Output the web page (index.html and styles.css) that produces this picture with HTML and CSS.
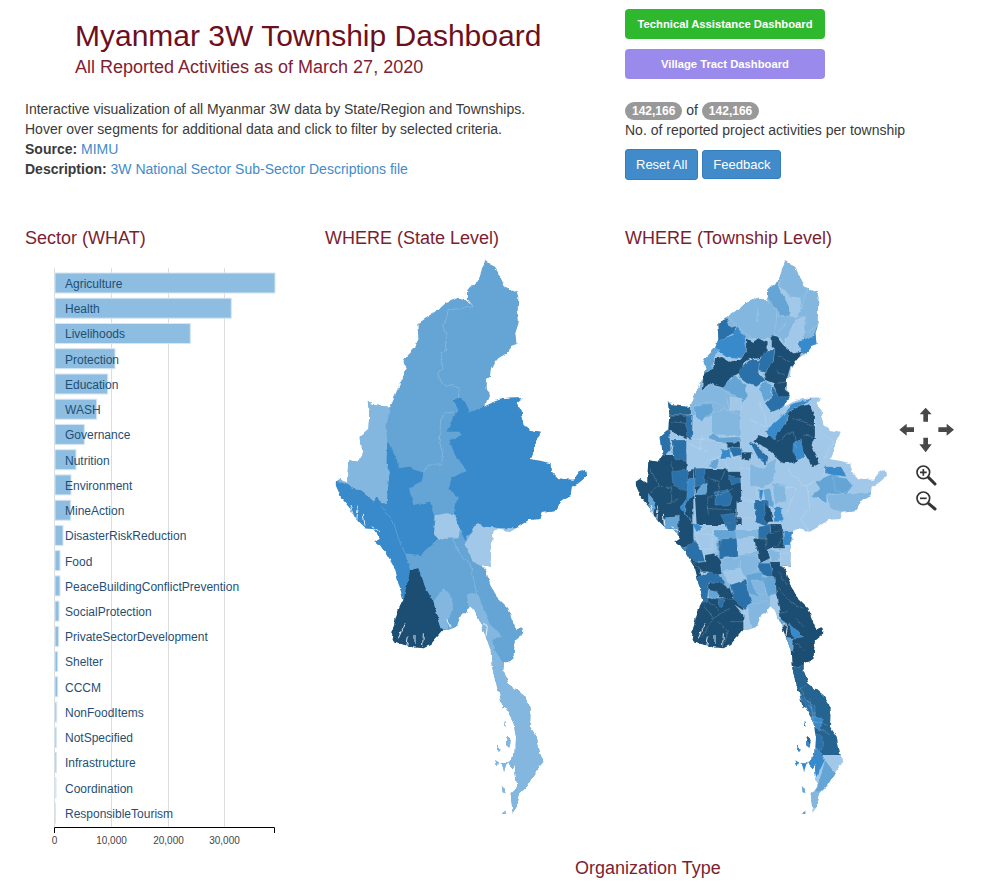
FILE: index.html
```html
<!DOCTYPE html>
<html lang="en">
<head>
<meta charset="utf-8">
<title>Myanmar 3W Township Dashboard</title>
<link rel="stylesheet" href="styles.css">
</head>
<body>
<div class="page">
  <header class="top">
    <div class="intro">
      <h1 class="title">Myanmar 3W Township Dashboard</h1>
      <h2 class="subtitle">All Reported Activities as of March 27, 2020</h2>
      <p class="copy">Interactive visualization of all Myanmar 3W data by State/Region and Townships.<br>
      Hover over segments for additional data and click to filter by selected criteria.<br>
      <b>Source:</b> <a href="#">MIMU</a><br>
      <b>Description:</b> <a href="#">3W National Sector Sub-Sector Descriptions file</a></p>
    </div>
    <div class="actions">
      <a class="dash dash-green" href="#">Technical Assistance Dashboard</a>
      <a class="dash dash-purple" href="#">Village Tract Dashboard</a>
      <div class="counter"><span class="badge">142,166</span> of <span class="badge">142,166</span><br>No. of reported project activities per township</div>
      <div class="btns">
        <a class="btn btn-reset" href="#">Reset All</a>
        <a class="btn" href="#">Feedback</a>
      </div>
    </div>
  </header>

  <section class="charts">
    <div class="col">
      <h3 class="heading">Sector (WHAT)</h3>
      <svg class="rowchart" viewBox="25 262 270 580" width="270" height="580">
        <g class="grid">
          <line x1="54.5" y1="268" x2="54.5" y2="827"/><line x1="111.5" y1="268" x2="111.5" y2="827"/>
          <line x1="168.5" y1="268" x2="168.5" y2="827"/><line x1="224.5" y1="268" x2="224.5" y2="827"/>
        </g>
        <g class="bars">
          <rect x="55" y="273" width="220" height="20"/><rect x="55" y="298.2" width="176.3" height="20"/>
          <rect x="55" y="323.5" width="135.3" height="20"/><rect x="55" y="348.7" width="60" height="20"/>
          <rect x="55" y="374" width="52.7" height="20"/><rect x="55" y="399.2" width="41.7" height="20"/>
          <rect x="55" y="424.4" width="29.3" height="20"/><rect x="55" y="449.7" width="21" height="20"/>
          <rect x="55" y="474.9" width="16" height="20"/><rect x="55" y="500.2" width="15.7" height="20"/>
          <rect x="55" y="525.4" width="8" height="20"/><rect x="55" y="550.6" width="5" height="20"/>
          <rect x="55" y="575.9" width="5" height="20"/><rect x="55" y="601.1" width="4" height="20"/>
          <rect x="55" y="626.4" width="3.7" height="20"/><rect x="55" y="651.6" width="2.7" height="20"/>
          <rect x="55" y="676.8" width="2.7" height="20"/><rect x="55" y="702.1" width="1.7" height="20"/>
          <rect x="55" y="727.3" width="1.3" height="20"/><rect x="55" y="752.6" width="1.3" height="20"/>
          <rect x="55" y="777.8" width="1" height="20"/><rect x="55" y="803" width=".4" height="20"/>
        </g>
        <g class="labels">
          <text x="65" y="288">Agriculture</text><text x="65" y="313">Health</text>
          <text x="65" y="338">Livelihoods</text><text x="65" y="364">Protection</text>
          <text x="65" y="389">Education</text><text x="65" y="414">WASH</text>
          <text x="65" y="439">Governance</text><text x="65" y="465">Nutrition</text>
          <text x="65" y="490">Environment</text><text x="65" y="515">MineAction</text>
          <text x="65" y="540">DisasterRiskReduction</text><text x="65" y="566">Food</text>
          <text x="65" y="591">PeaceBuildingConflictPrevention</text><text x="65" y="616">SocialProtection</text>
          <text x="65" y="641">PrivateSectorDevelopment</text><text x="65" y="666">Shelter</text>
          <text x="65" y="692">CCCM</text><text x="65" y="717">NonFoodItems</text>
          <text x="65" y="742">NotSpecified</text><text x="65" y="767">Infrastructure</text>
          <text x="65" y="793">Coordination</text><text x="65" y="818">ResponsibleTourism</text>
        </g>
        <path class="axis" d="M54.5 833V827.5H274.5V833"/>
        <g class="ticks">
          <text x="54.5" y="844">0</text><text x="111.5" y="844">10,000</text>
          <text x="168.5" y="844">20,000</text><text x="224.5" y="844">30,000</text>
        </g>
      </svg>
    </div>

    <div class="col">
      <h3 class="heading">WHERE (State Level)</h3>
      <svg class="map" viewBox="0 0 810 1740" width="270" height="580">
        <defs>
          <filter id="rough" filterUnits="userSpaceOnUse" x="0" y="0" width="810" height="1740" color-interpolation-filters="sRGB">
            <feTurbulence type="fractalNoise" baseFrequency=".05" numOctaves="2" seed="4" result="n"/>
            <feDisplacementMap in="SourceGraphic" in2="n" scale="12" xChannelSelector="R" yChannelSelector="G"/>
          </filter>
          <clipPath id="outline">
            <path d="M465 18 480 28 495 35 505 50 515 75 525 95 540 108 560 105 565 130 563 170 567 200 556 235 560 270 545 275 530 295 505 310 490 328 482 345 480 365 468 375 467 400 480 415 470 440 462 455 490 440 515 432 578 430 560 445 575 470 580 510 600 525 632 530 628 545 612 565 612 590 602 612 630 618 665 625 665 650 685 670 730 675 745 655 765 645 768 665 745 685 725 695 722 720 695 735 680 765 635 770 628 792 595 795 565 815 540 830 510 820 490 830 485 865 480 935 455 930 470 950 480 985 500 1025 535 1060 545 1090 560 1125 578 1120 580 1135 555 1155 550 1215 522 1225 520 1245 535 1285 580 1320 602 1355 600 1415 620 1445 630 1495 640 1520 620 1545 590 1595 570 1615 560 1655 548 1673 542 1615 562 1595 555 1545 558 1445 550 1400 525 1355 518 1360 510 1325 495 1275 485 1230 482 1185 468 1145 450 1105 430 1060 420 1050 412 1075 395 1075 380 1115 355 1125 340 1125 300 1170 280 1180 250 1177 225 1170 200 1165 185 1155 190 1115 205 1065 220 1035 205 980 195 940 170 900 150 870 130 862 150 848 130 822 105 820 85 800 60 760 35 730 17 690 17 680 30 672 52 688 52 670 55 615 85 620 98 600 92 545 115 525 118 480 113 435 125 450 180 455 195 420 215 375 230 340 218 325 225 310 255 280 265 250 262 205 300 180 330 160 350 142 385 128 410 135 432 155 410 130 412 105 425 90 450 75 452 50Z"/>
            <path d="M525 1400 530 1415 522 1410ZM530 1445 542 1455 538 1478 528 1470ZM500 1465 515 1485 506 1490ZM555 1495 562 1520 548 1540 535 1525ZM515 1525 530 1525 522 1548ZM495 1515 510 1525 502 1530ZM515 1590 530 1615 518 1612ZM515 1675 525 1665 528 1680Z"/>
          </clipPath>
        </defs>
        <g filter="url(#rough)">
        <g clip-path="url(#outline)">
          <rect class="c3" width="810" height="1740"/>
          <path class="c2" d="M100 420 182 450 168 520 172 560 170 620 178 660 170 745 150 745 140 725 133 740 95 710 52 690 0 660V420Z"/>
          <path class="c4" d="M0 670 52 690 95 710 133 740 140 725 150 745 170 745 178 660 170 620 172 560 188 590 200 610 205 640 240 635 280 655 275 680 237 700 250 750 300 740 315 780 312 840 325 850 270 900 225 895 240 945 235 975 220 1035 100 1040 0 900Z"/>
          <path class="c4" d="M370 435 385 428 405 440 420 472 462 455 810 300V820H510L470 815 440 808 405 855 390 825 372 775 383 725 355 705 365 670 410 645 375 600 358 555 395 540 392 530 350 530 372 480 385 465Z"/>
          <path class="c1" d="M318 780 350 775 372 778 390 825 385 850 325 852 312 838Z"/>
          <path class="c1" d="M405 865 440 808 470 815 510 820H600V960L480 935 455 930 428 920 415 885Z"/>
          <path class="c6" d="M240 945 265 940 290 1005 310 1040 322 1080 335 1120 340 1125V1300H100V1100L220 1035 235 975Z"/>
          <path class="c2" d="M310 1040 340 1000 358 1015 370 1050 360 1085 352 1095 355 1125 335 1120 322 1080Z"/>
          <path class="c2" d="M410 1015 440 1015 460 1060 478 1105 455 1110 435 1075 415 1050Z"/>
          <path class="c2" d="M480 1105 515 1145 490 1150 495 1185 522 1228 490 1240H400V1110Z"/>
          <path class="c2" d="M400 1240H490L522 1228H700V1700H400Z"/>
          <g class="seam">
            <path d="M432 155 355 165 350 190 338 210 348 240 350 285 330 295 340 345 322 352 330 375 350 395 370 392 388 400 385 430"/>
            <path d="M370 470 345 475 332 490 328 560 338 590 335 630 295 630 280 655"/>
            <path d="M155 755 190 800 205 850 225 895"/>
            <path d="M370 850 385 895 420 925 440 1015"/>
          </g>
          <g class="inlet">
            <path d="M60 750 75 790M85 755 80 795M100 775 105 815M125 815 150 830"/>
            <path d="M225 1105 205 1150M235 1145 230 1170M255 1140 255 1170M280 1135 278 1175"/>
            <path d="M455 1110 472 1110 468 1140M350 1095 362 1118"/>
          </g>
        </g>
        </g>
      </svg>
    </div>

    <div class="col col-township">
      <h3 class="heading">WHERE (Township Level)</h3>
      <svg class="map" viewBox="0 0 810 1740" width="270" height="580">
        <g filter="url(#rough)">
        <g clip-path="url(#outline)">
          <rect class="c1" width="810" height="1740"/>
          <path class="c2" d="M280 100H600V250H280Z"/>
          <path class="c6" d="M0 600H190V850L230 1040H0Z"/>
          <path class="c2" d="M170 380 330 400 330 540 170 540Z"/>
          <path class="c6" d="M190 640 335 645 335 810 200 810Z"/>
          <path class="c2" d="M260 825H420V1055H260Z"/>
          <path class="c6" d="M420 920 700 920 700 1235H480Z"/>
          <path class="c6" d="M190 1030H340V1300H100V1100Z"/>
          <path class="c7" d="M470 1235H700V1500H470Z"/>
          <g class="cells">
            <path class="c2" d="M450 60 465 18 495 35 530 105 510 130 480 125 450 95Z"/>
            <path class="c3" d="M450 75 405 105 415 145 440 160 445 180 480 185 478 155 455 110 448 90Z"/>
            <path class="c1" d="M450 95 480 125 510 130 515 165 500 185 480 185 478 155 458 115Z"/>
            <path class="c2" d="M515 165 500 185 530 185 522 235 560 215 575 170 560 100 530 105Z"/>
            <path class="c1" d="M525 185 495 195 475 240 462 270 490 292 505 260 520 250Z"/>
            <path class="c4" d="M562 210 550 245 510 255 505 270 520 298 570 270Z"/>
            <path class="c2" d="M290 185 350 130 410 125 440 165 440 240 420 250 390 255 350 240 320 210Z"/>
            <path class="c2" d="M440 180 500 185 475 240 462 268 450 245 435 240Z"/>
            <path class="c5" d="M255 205 290 190 300 215 320 210 310 235 255 265Z"/>
            <path class="c4" d="M320 215 345 245 350 285 335 310 290 305 250 285 265 255 310 240Z"/>
            <path class="c3" d="M210 325 255 280 270 285 255 300 245 350 225 365Z"/>
            <path class="c6" d="M350 250 370 260 385 250 410 262 410 295 390 310 360 312 340 325 335 350 300 370 285 400 235 385 215 410 220 360 250 340 255 310 275 305 300 320 335 310 350 285Z"/>
            <path class="c5" d="M360 315 390 315 385 350 405 375 380 395 350 385 330 370 325 350 340 330Z"/>
            <path class="c5" d="M410 285 435 285 430 320 405 350 385 345 390 315Z"/>
            <path class="c6" d="M425 240 440 245 460 270 490 295 520 290 505 310 480 340 470 375 465 405 480 415 470 430 445 430 430 385 405 375 400 355 430 320 435 285 425 275Z"/>
            <path class="c5" d="M430 390 445 425 480 425 462 455 425 472 405 445 425 425Z"/>
            <path class="c3" d="M405 375 425 390 425 425 403 440 388 400Z"/>
            <path class="c3" d="M310 360 330 375 350 390 350 430 335 445 315 420 275 405 290 385Z"/>
            <path class="c2" d="M170 450 215 375 215 410 240 385 275 405 310 425 300 465 250 440 200 445 180 470Z"/>
            <path class="c3" d="M190 455 245 445 250 470 215 500 195 480Z"/>
            <path class="c1" d="M170 490 195 480 215 500 245 480 245 540 235 555 170 550Z"/>
            <path class="c1" d="M300 425 335 430 335 470 300 465Z"/>
            <path class="c2" d="M245 475 280 460 330 480 330 545 280 540 245 535Z"/>
            <path class="c7" d="M100 430 125 450 180 455 180 480 100 480Z"/>
            <path class="c6" d="M100 480 180 480 170 550 110 525Z"/>
            <path class="c5" d="M170 480 188 480 186 560 170 545Z"/>
            <path class="c5" d="M85 530 118 528 122 585 105 605 85 585Z"/>
            <path class="c5" d="M125 555 170 555 170 620 130 610Z"/>
            <path class="c1" d="M170 550 235 555 280 565 280 605 245 610 210 640 170 650Z"/>
            <path class="c3" d="M235 545 250 535 270 548 330 545 330 560 290 565 260 560Z"/>
            <path class="c4" d="M272 585 295 580 305 612 275 612Z"/>
            <path class="c6" d="M292 562 330 562 330 578 292 578Z"/>
            <path class="c5" d="M298 578 335 578 335 600 310 605Z"/>
            <path class="c6" d="M335 592 365 592 360 618 345 610 335 615Z"/>
            <path class="c3" d="M245 612 270 612 260 640 240 635Z"/>
            <path class="c5" d="M125 650 170 645 178 690 170 710 150 700 128 690Z"/>
            <path class="c3" d="M55 715 75 745 70 775 55 750Z"/>
            <path class="c3" d="M100 790 145 780 145 840 100 830Z"/>
            <path class="c4" d="M175 670 195 670 190 720 165 745 165 775 190 805 218 815 200 832 185 800 150 760 170 730Z"/>
            <path class="c5" d="M195 640 225 640 225 690 195 695Z"/>
            <path class="c3" d="M215 690 232 680 230 718 192 720Z"/>
            <path class="c5" d="M255 710 290 705 310 725 300 750 255 750Z"/>
            <path class="c5" d="M270 780 315 775 320 800 285 805Z"/>
            <path class="c5" d="M285 805 320 805 315 835 295 835Z"/>
            <path class="c5" d="M295 660 330 670 332 685 305 690Z"/>
            <path class="c1" d="M280 612 330 605 340 650 300 650Z"/>
            <path class="c1" d="M330 640 380 640 380 740 335 730Z"/>
            <path class="c6" d="M370 560 385 540 410 548 440 510 465 510 475 470 515 450 540 445 555 480 555 545 545 570 570 625 548 637 520 590 500 622 460 625 410 580Z"/>
            <path class="c4" d="M415 520 450 490 490 445 550 430 515 450 475 470 465 510 445 530 430 555 405 530Z"/>
            <path class="c4" d="M490 565 510 550 525 605 505 615 488 590Z"/>
            <path class="c5" d="M358 558 385 575 415 605 410 630 385 610Z"/>
            <path class="c3" d="M555 680 610 655 668 690 655 715 590 720 590 745 545 720 570 700Z"/>
            <path class="c2" d="M590 720 655 715 730 710 685 770 630 770 600 760Z"/>
            <path class="c4" d="M585 635 630 635 650 665 610 660 585 655Z"/>
            <path class="c3" d="M610 665 650 670 668 695 640 715 615 705Z"/>
            <path class="c2" d="M360 630 400 640 420 620 440 605 430 680 400 700 360 690Z"/>
            <path class="c3" d="M400 705 420 700 432 760 405 740Z"/>
            <path class="c2" d="M425 680 465 690 470 740 435 745Z"/>
            <path class="c4" d="M385 700 400 705 395 735 385 725Z"/>
            <path class="c5" d="M375 735 415 735 420 790 410 815 375 800Z"/>
            <path class="c6" d="M405 740 420 760 430 800 405 800Z"/>
            <path class="c4" d="M432 755 457 755 457 800 432 800Z"/>
            <path class="c5" d="M385 815 420 810 425 850 385 850Z"/>
            <path class="c6" d="M420 810 455 810 465 880 375 880 385 850 425 850Z"/>
            <path class="c4" d="M460 830 490 830 480 870 460 870Z"/>
            <path class="c1" d="M320 740 375 740 375 790 320 790Z"/>
            <path class="c1" d="M200 830 250 810 245 870 210 880Z"/>
            <path class="c5" d="M265 850 325 850 325 880 265 880Z"/>
            <path class="c2" d="M325 850 375 850 375 880 325 880Z"/>
          </g>
          <g class="cells" transform="translate(150 825)">
            <path class="c1" d="M45 10 100 15 95 55 65 60Z"/>
            <path class="c5" d="M20 50 45 30 65 60 75 95 40 95 20 75Z"/>
            <path class="c4" d="M-10 50H20L15 75-10 80Z"/>
            <path class="c3" d="M105 0H165L170 25 120 30 100 15Z"/>
            <path class="c5" d="M125 28 170 25 175 80 115 85 115 60Z"/>
            <path class="c6" d="M75 75 105 70 120 90 125 135 100 140 85 125 65 125 40 100 75 95Z"/>
            <path class="c6" d="M125 90 145 90 145 110 130 115Z"/>
            <path class="c5" d="M45 145 90 125 115 135 135 155 130 165 90 155 80 215 55 215Z"/>
            <path class="c6" d="M90 155 130 160 150 175 160 210 135 205 100 190 85 180Z"/>
            <path class="c3" d="M85 180 110 185 120 200 100 210 85 200Z"/>
            <path class="c5" d="M115 205 135 210 130 230 115 225Z"/>
            <path class="c1" d="M170 25 225 22 235 65 175 75Z"/>
            <path class="c2" d="M175 75 230 75 240 110 205 135 195 150 180 110Z"/>
            <path class="c2" d="M120 85 180 85 175 115 125 125Z"/>
            <path class="c1" d="M130 125 180 115 195 150 150 165 140 145Z"/>
            <path class="c3" d="M195 135 245 125 255 170 235 200 205 190Z"/>
            <path class="c2" d="M215 150 245 150 260 190 235 195Z"/>
            <path class="c5" d="M150 165 195 150 215 220 195 240 160 205Z"/>
            <path class="c5" d="M235 100 270 100 280 140 265 140 240 130Z"/>
            <path class="c3" d="M245 140 285 140 290 190 265 200 255 170Z"/>
            <path class="c6" d="M222 25 255 30 270 85 240 100Z"/>
            <path class="c6" d="M262 10 310 0 300 40 260 60Z"/>
            <path class="c2" d="M265 60 300 65 295 95 275 95Z"/>
            <path class="c1" d="M300 70 340 70 335 115 300 105Z"/>
            <path class="c2" d="M205 225 260 210 272 225 262 250 240 290 215 295 205 265Z"/>
            <path class="c1" d="M165 225 195 245 210 265 195 260Z"/>
            <path class="c3" d="M285 255 322 282 305 290Z"/>
            <path class="c4" d="M328 278 368 320 345 325 335 315Z"/>
            <path class="c3" d="M310 320 340 325 340 365 325 365Z"/>
            <path class="c7" d="M330 415 370 405 390 450 350 490 335 450Z"/>
            <path class="c5" d="M360 495 405 530 405 565 380 540Z"/>
            <path class="c4" d="M390 560 430 565 420 600 400 590Z"/>
            <path class="c5" d="M400 610 430 620 425 660 405 655Z"/>
            <path class="c4" d="M350 610 415 660 425 670 435 690 410 740 345 740Z"/>
            <path class="c3" d="M435 690 470 735 420 790 390 810 412 770Z"/>
            <path class="c2" d="M385 785 425 785 410 835 390 835Z"/>
            <path class="c3" d="M340 740 405 740 385 800 345 800Z"/>
            <path class="c3" d="M345 800 380 800 375 860 345 860Z"/>
          </g>
          <g class="seam">
            <path d="M60 640 85 690 60 715M85 690 125 700 125 740M110 745 145 735M125 620 130 650"/>
            <path d="M125 500 170 505M120 480 180 480"/>
            <path d="M235 670 270 680 285 650M270 680 265 720 230 730 235 780M265 720 310 700M230 760 305 765"/>
            <path d="M445 300 480 320M440 350 465 360M445 385 470 380"/>
            <path d="M490 490 550 510M440 560 490 530 500 580M520 540 555 545"/>
            <path d="M470 640 520 690 560 680M440 690 500 700 470 770M530 690 540 760 510 790 540 830M590 640 570 680"/>
            <path d="M360 490 410 520 405 480 385 440M290 430 300 470M215 540 210 590M180 570 230 590"/>
            <path d="M580 540 610 560 580 610M385 150 380 200M470 200 440 240"/>
            <path d="M215 1040 250 1090 215 1145M250 1090 300 1060M260 1100 295 1130 280 1175M300 1100 345 1100M235 1040 270 1065"/>
            <path d="M445 1000 480 1040 520 1060M445 950 470 990M470 1065 445 1080M500 1090 520 1115M525 1190 490 1160"/>
            <path d="M540 1330 550 1400 590 1410M570 1420 600 1440M510 1300 560 1390"/>
          </g>
          <g class="inlet">
            <path d="M60 750 75 790M85 755 80 795M100 775 105 815M125 815 150 830"/>
            <path d="M225 1105 205 1150M235 1145 230 1170M255 1140 255 1170M280 1135 278 1175"/>
            <path d="M455 1110 472 1110 468 1140"/>
          </g>
        </g>
        </g>
      </svg>
      <svg class="nav" viewBox="0 0 240 375" width="80" height="125">
        <g class="arrows">
          <path d="M107 38 125 58H114V80H100V58H89Z"/>
          <path d="M107 172 125 148H114V128H100V148H88Z"/>
          <path d="M28 104 50 86V97H72V111H50V122Z"/>
          <path d="M192 104 170 86V97H145V111H170V122Z"/>
        </g>
        <g class="lens">
          <circle cx="100" cy="232" r="19"/><path d="M90 232H110M100 222V242"/>
          <circle cx="100" cy="310" r="19"/><path d="M90 310H110"/>
        </g>
        <path class="handle" d="M116 248 135 267M116 326 135 342"/>
      </svg>
    </div>
  </section>

  <h3 class="heading heading-org">Organization Type</h3>
</div>
</body>
</html>
```

FILE: styles.css
```css
* { box-sizing: border-box; }
html, body { margin: 0; padding: 0; background: #fff; }
body { font-family: "Liberation Sans", Arial, sans-serif; font-size: 14px; line-height: 20px; color: #3a3a3a; }
.page { padding-left: 25px; width: 996px; }
.top { display: flex; margin-bottom: 47px; }
.intro { width: 600px; padding-top: 18px; }
.title { margin: 0 0 4px 50px; font-size: 30px; line-height: 35px; font-weight: 400; color: #6d0f20; }
.subtitle { margin: 0 0 22px 50px; font-size: 18px; line-height: 20px; font-weight: 400; color: #7f2233; }
.copy { margin: 0; }
a { color: #428bca; text-decoration: none; }
.actions { width: 300px; padding-top: 9px; display: flex; flex-direction: column; align-items: flex-start; }
.dash { width: 200px; height: 30px; margin-bottom: 10px; border-radius: 4px; color: #fff; font-size: 11.25px; font-weight: 700; line-height: 30px; text-align: center; }
.dash-green { background: #2eb82e; }
.dash-purple { background: #998aeb; margin-bottom: 21px; }
.badge { display: inline-block; min-width: 10px; padding: 3px 7px; border-radius: 10px; background: #999; color: #fff; font-size: 12px; font-weight: 700; line-height: 12px; vertical-align: baseline; }
.btns { display: flex; align-items: center; gap: 4px; margin-top: 9px; }
.btn { display: block; padding: 0 10px; height: 29px; line-height: 27px; font-size: 13px; border: 1px solid #357ebd; border-radius: 3px; background: #428bca; color: #fff; }
.btn-reset { height: 31px; line-height: 29px; }
.charts { display: flex; align-items: flex-start; }
.col { width: 300px; flex: none; }
.col-township { position: relative; }
.heading { margin: 0; font-size: 18px; line-height: 22px; font-weight: 400; color: #7b1e31; }
.rowchart { display: block; margin-top: 13px; overflow: visible; }
.map { display: block; margin: 6px 0 0 5px; }
.grid line { stroke: #ddd; stroke-width: 1; }
.bars rect { fill: #8dbde0; stroke: #d6e6f3; stroke-width: 1; }
.labels text { font-size: 12px; fill: #1f4f75; }
.axis { fill: none; stroke: #000; stroke-width: 1; }
.ticks text { font-size: 10px; fill: #444; text-anchor: middle; }
.c1 { fill: #a1c8e8; }
.c2 { fill: #83b7df; }
.c3 { fill: #65a5d6; }
.c4 { fill: #388acb; }
.c5 { fill: #2a71a9; }
.c6 { fill: #1c4d72; }
.c7 { fill: #256391; }
.cells path { stroke: #fff; stroke-opacity: .25; stroke-width: 1.5; }
.seam path { fill: none; stroke: #fff; stroke-opacity: .3; stroke-width: 1.8; }
.inlet path { fill: none; stroke: #fff; stroke-width: 2.5; }
.nav { position: absolute; left: 265px; top: 168px; }
.arrows path { fill: #484848; }
.lens circle, .lens path { fill: none; stroke: #333; stroke-width: 5; }
.handle { fill: none; stroke: #333; stroke-width: 9; stroke-linecap: round; }
.heading-org { margin: 15px 0 0 550px; }
```
